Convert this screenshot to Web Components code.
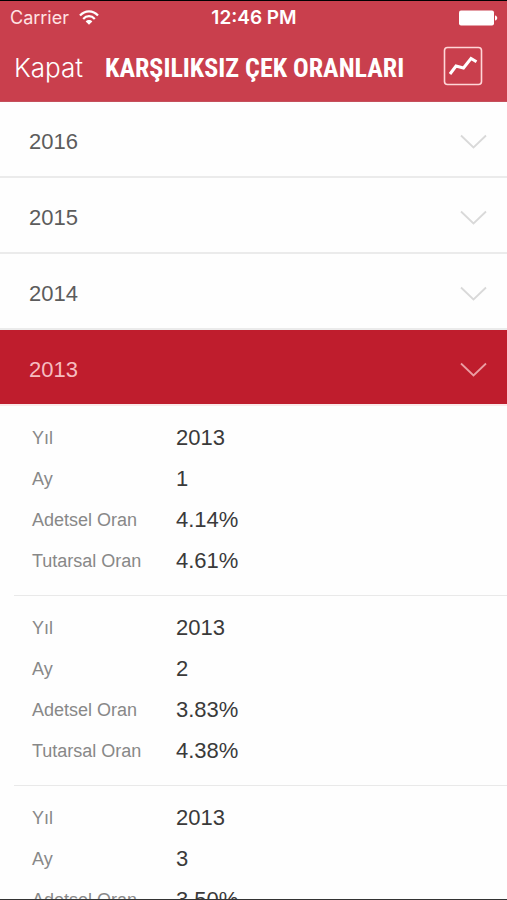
<!DOCTYPE html>
<html lang="tr">
<head>
<meta charset="utf-8">
<meta name="viewport" content="width=device-width, initial-scale=1">
<title>Karşılıksız Çek Oranları</title>
<style>
  body {
    margin: 0;
    background: #fefefe;
    font-family: "Liberation Sans", Arial, sans-serif;
  }
</style>
</head>
<body>
<rates-app>
  <status-bar slot="header" carrier="Carrier" time="12:46 PM"></status-bar>
  <nav-bar slot="header" back="Kapat">KARŞILIKSIZ ÇEK ORANLARI</nav-bar>
  <year-section year="2016"></year-section>
  <year-section year="2015"></year-section>
  <year-section year="2014"></year-section>
  <year-section year="2013" open>
    <rate-entry year="2013" month="1" count="4.14%" amount="4.61%"></rate-entry>
    <rate-entry year="2013" month="2" count="3.83%" amount="4.38%"></rate-entry>
    <rate-entry year="2013" month="3" count="3.50%" amount="4.12%"></rate-entry>
  </year-section>
</rates-app>

<script>
class RatesApp extends HTMLElement {
  constructor() {
    super();
    this.attachShadow({ mode: 'open' });
    this.shadowRoot.innerHTML = `
      <style>
        :host {
          display: flex;
          flex-direction: column;
          box-sizing: border-box;
          height: 100vh;
          border-top: 1px solid #000;
          border-bottom: 1px solid #333;
        }
        header {
          background: #c93f4d;
          color: #fff;
          border-bottom: 1px solid #c5505c;
        }
        main {
          flex: 1;
          min-height: 0;
          overflow-y: auto;
          scrollbar-width: none;
        }
      </style>
      <header><slot name="header"></slot></header>
      <main><slot></slot></main>
    `;
  }
}

class StatusBar extends HTMLElement {
  connectedCallback() {
    this.attachShadow({ mode: 'open' });
    this.shadowRoot.innerHTML = `
      <style>
        :host {
          display: grid;
          grid-template-columns: 1fr auto 1fr;
          align-items: center;
          height: 34px;
          padding: 0 9px 0 10px;
          font: 400 18px/24px Inter, sans-serif;
        }
        .carrier {
          display: flex;
          align-items: center;
          gap: 10px;
          color: #ffe3e3;
        }
        .time {
          font-size: 19px;
          font-weight: 600;
        }
        .battery {
          justify-self: end;
        }
        svg {
          display: block;
        }
      </style>
      <div class="carrier">
        <span>${this.getAttribute('carrier')}</span>
        <svg width="20" height="16" viewBox="0 0 20 16" fill="none" stroke="#fff" stroke-width="2.2" aria-hidden="true">
          <path d="M1 5.6C6-.1 14-.1 19 5.6M4.2 8.9c3.3-3.6 8.3-3.6 11.6 0"/>
          <path d="M6.700 11.400c1.900-1.900 4.700-1.900 6.600 0L10 14.700z" fill="#fff" stroke="none"/>
        </svg>
      </div>
      <span class="time">${this.getAttribute('time')}</span>
      <svg class="battery" width="39" height="16" viewBox="0 0 39 16" fill="#fff" aria-hidden="true">
        <rect y="0.5" width="35" height="15" rx="2"/>
        <path d="M36 5.5c3 .5 3 4.5 0 5z"/>
      </svg>
    `;
  }
}

class NavBar extends HTMLElement {
  connectedCallback() {
    this.attachShadow({ mode: 'open' });
    this.shadowRoot.innerHTML = `
      <style>
        :host {
          display: flex;
          align-items: center;
          box-sizing: border-box;
          height: 66px;
          padding: 0 24px 4px 14px;
          gap: 22px;
        }
        button {
          padding: 0;
          border: 0;
          background: none;
          color: inherit;
          cursor: pointer;
        }
        .back, h1 {
          padding-top: 4px;
        }
        .back {
          font: 300 26px/32px Inter, sans-serif;
        }
        h1 {
          flex: 1;
          margin: 0;
          font: 700 26px/32px "Roboto Condensed", "Liberation Sans Narrow", sans-serif;
          white-space: nowrap;
        }
        svg {
          display: block;
        }
      </style>
      <button class="back" type="button">${this.getAttribute('back')}</button>
      <h1><slot></slot></h1>
      <button type="button" aria-label="Grafik">
        <svg width="40" height="40" viewBox="0 0 40 40" fill="none" stroke="#fff">
          <rect x="1.5" y="1.5" width="37" height="37" rx="3" stroke="#ffd6d8" stroke-width="1.6"/>
          <path d="M7 28l6-8 7.500 2 7.500-9.500 5.500 3.300" stroke-width="3"/>
        </svg>
      </button>
    `;
  }
}

class YearSection extends HTMLElement {
  connectedCallback() {
    this.attachShadow({ mode: 'open' });
    this.shadowRoot.innerHTML = `
      <style>
        :host {
          display: block;
          color: #5c5c5c;
          --chevron: #d9d9d9;
          --line: #ebebeb;
        }
        :host([open]) {
          --chevron: #eb9da3;
          --line: #fbe9ea;
        }
        button {
          display: flex;
          align-items: center;
          justify-content: space-between;
          box-sizing: border-box;
          width: 100%;
          height: 76px;
          padding: 6px 20px 0 29px;
          border: 0;
          border-bottom: 2px solid var(--line);
          background: none;
          color: inherit;
          font: 400 22px/28px "Liberation Sans", Arial, sans-serif;
          cursor: pointer;
        }
        :host([open]) button {
          background: #bf1d2d;
          background-clip: padding-box;
          color: #f6bcc0;
        }
        .content {
          display: none;
        }
        :host([open]) .content {
          display: block;
        }
      </style>
      <button type="button">
        <span>${this.getAttribute('year')}</span>
        <svg width="27" height="16" viewBox="0 0 27 16" fill="none" stroke="var(--chevron)" stroke-width="1.8" aria-hidden="true">
          <path d="M1 1.5l12.500 12 12.500-12"/>
        </svg>
      </button>
      <div class="content"><slot></slot></div>
    `;
    this.button = this.shadowRoot.querySelector('button');
    this.button.addEventListener('click', () => this.toggle());
    this.button.setAttribute('aria-expanded', this.hasAttribute('open'));
  }

  toggle() {
    this.toggleAttribute('open');
    this.button.setAttribute('aria-expanded', this.hasAttribute('open'));
  }
}

class RateEntry extends HTMLElement {
  connectedCallback() {
    const rows = [
      ['Yıl', 'year'],
      ['Ay', 'month'],
      ['Adetsel Oran', 'count'],
      ['Tutarsal Oran', 'amount'],
    ];
    this.attachShadow({ mode: 'open' });
    this.shadowRoot.innerHTML = `
      <style>
        :host {
          display: block;
          margin-left: 14px;
          padding: 11px 0 14px 18px;
          border-bottom: 1px solid #e9e9e9;
        }
        dl {
          display: grid;
          grid-template-columns: 144px 1fr;
          grid-auto-rows: 41px;
          align-items: center;
          margin: 0;
        }
        dt {
          color: #888;
          font-size: 18px;
          line-height: 24px;
        }
        dd {
          margin: 0;
          color: #3a3a3a;
          font-size: 22px;
          line-height: 28px;
        }
      </style>
      <dl>
        ${rows.map(([label, key]) => `<dt>${label}</dt><dd>${this.getAttribute(key)}</dd>`).join('')}
      </dl>
    `;
  }
}

customElements.define('rates-app', RatesApp);
customElements.define('status-bar', StatusBar);
customElements.define('nav-bar', NavBar);
customElements.define('year-section', YearSection);
customElements.define('rate-entry', RateEntry);
</script>
</body>
</html>
